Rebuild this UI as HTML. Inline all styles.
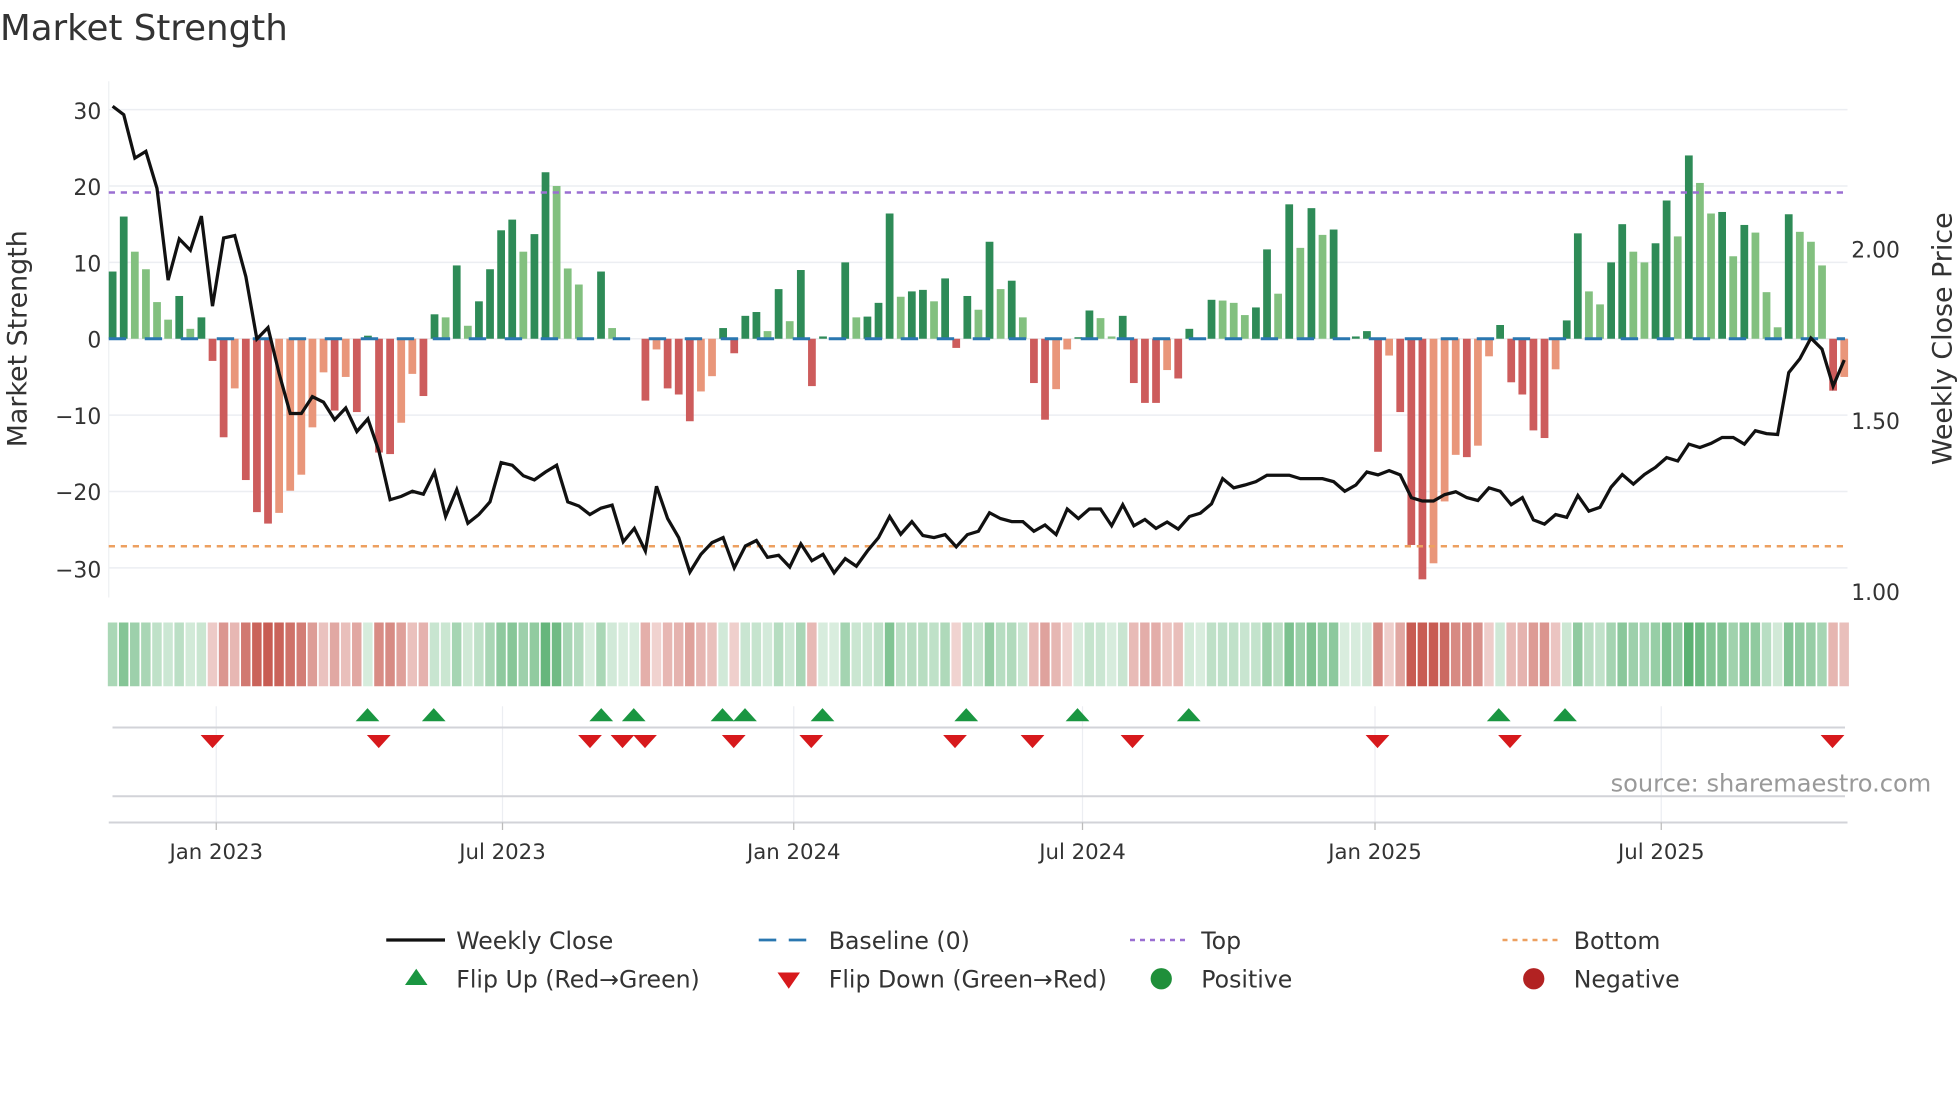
<!DOCTYPE html>
<html><head><meta charset="utf-8">
<style>
html,body{margin:0;padding:0;background:#fff;}
svg{display:block;}
text{font-family:"DejaVu Sans","Liberation Sans",sans-serif;fill:#333;}
</style></head>
<body>
<svg id="s" xmlns="http://www.w3.org/2000/svg" width="1960" height="1102" viewBox="0 0 1568 881.6">
<rect width="1568" height="881.6" fill="#fff"/>
<text x="0" y="32" font-size="28.5" fill="#333">Market Strength</text>
<g id="grid" stroke="#eceef2" stroke-width="1.2"></g>
<line x1="87" y1="65" x2="87" y2="478" stroke="#eef0f3" stroke-width="1"/>
<g id="bars"></g>
<line x1="87" y1="271" x2="1476" y2="271" stroke="#2a77b0" stroke-width="2.4" stroke-dasharray="13.9 14.9"/>
<line x1="87" y1="154" x2="1476" y2="154" stroke="#9a6fd2" stroke-width="2" stroke-dasharray="5 4.6"/>
<line x1="87" y1="437" x2="1476" y2="437" stroke="#eda060" stroke-width="2" stroke-dasharray="5 4.6"/>
<polyline id="close" fill="none" stroke="#111" stroke-width="2.6" stroke-linejoin="miter"/>
<g id="heat"></g>
<g stroke="#eceef2" stroke-width="1">
<line x1="173" y1="565" x2="173" y2="658"/><line x1="402" y1="565" x2="402" y2="658"/>
<line x1="635" y1="565" x2="635" y2="658"/><line x1="866" y1="565" x2="866" y2="658"/>
<line x1="1100" y1="565" x2="1100" y2="658"/><line x1="1329" y1="565" x2="1329" y2="658"/>
</g>
<line x1="90" y1="582" x2="1476" y2="582" stroke="#d2d3d8" stroke-width="1.6"/>
<line x1="90" y1="637" x2="1476" y2="637" stroke="#d2d3d8" stroke-width="1.6"/>
<line x1="87" y1="658" x2="1478" y2="658" stroke="#d2d3d8" stroke-width="1.6"/>
<g stroke="#bbb" stroke-width="1">
<line x1="173" y1="658" x2="173" y2="664"/><line x1="402" y1="658" x2="402" y2="664"/>
<line x1="635" y1="658" x2="635" y2="664"/><line x1="866" y1="658" x2="866" y2="664"/>
<line x1="1100" y1="658" x2="1100" y2="664"/><line x1="1329" y1="658" x2="1329" y2="664"/>
</g>
<g id="marks"></g>
<g font-size="17.5" text-anchor="end">
<text x="81" y="95">30</text><text x="81" y="156">20</text><text x="81" y="217">10</text>
<text x="81" y="278">0</text><text x="81" y="339">−10</text><text x="81" y="400">−20</text><text x="81" y="462">−30</text>
</g>
<g font-size="17.5">
<text x="1481" y="206">2.00</text><text x="1481" y="343">1.50</text><text x="1481" y="480">1.00</text>
</g>
<text transform="translate(21,271) rotate(-90)" text-anchor="middle" font-size="21.5">Market Strength</text>
<text transform="translate(1561,271) rotate(-90)" text-anchor="middle" font-size="21.5">Weekly Close Price</text>
<g font-size="17" text-anchor="middle">
<text x="173" y="687">Jan 2023</text><text x="402" y="687">Jul 2023</text><text x="635" y="687">Jan 2024</text>
<text x="866" y="687">Jul 2024</text><text x="1100" y="687">Jan 2025</text><text x="1329" y="687">Jul 2025</text>
</g>
<text x="1545" y="633" text-anchor="end" font-size="19.3" fill="#999" style="fill:#999">source: sharemaestro.com</text>
<g font-size="18.9">
<line x1="309" y1="752" x2="356" y2="752" stroke="#111" stroke-width="2.6"/>
<text x="365" y="759">Weekly Close</text>
<line x1="607" y1="752" x2="651" y2="752" stroke="#2a77b0" stroke-width="2.2" stroke-dasharray="14 10"/>
<text x="663" y="759">Baseline (0)</text>
<line x1="904" y1="752" x2="948" y2="752" stroke="#9a6fd2" stroke-width="2" stroke-dasharray="4 4"/>
<text x="961" y="759">Top</text>
<line x1="1202" y1="752" x2="1248" y2="752" stroke="#eda060" stroke-width="2" stroke-dasharray="4 4"/>
<text x="1259" y="759">Bottom</text>
<polygon points="324,788 342,788 333,775" fill="#1a9641"/>
<text x="365" y="790">Flip Up (Red→Green)</text>
<polygon points="622,778 640,778 631,791" fill="#d7191c"/>
<text x="663" y="790">Flip Down (Green→Red)</text>
<circle cx="929" cy="783" r="8.5" fill="#1f8f3a"/>
<text x="961" y="790">Positive</text>
<circle cx="1227" cy="783" r="8.5" fill="#b22222"/>
<text x="1259" y="790">Negative</text>
</g>
</svg>
<script>
(function(){
var NS="http://www.w3.org/2000/svg";
function el(t,a,p){var e=document.createElementNS(NS,t);for(var k in a)e.setAttribute(k,a[k]);document.getElementById(p).appendChild(e);return e;}
for(var k=-3;k<=3;k++){var y=271-61.1*k;el("line",{x1:87,x2:1478,y1:y,y2:y},"grid");}
var v=[8.8,16,11.4,9.1,4.8,2.5,5.6,1.3,2.8,-2.9,-12.9,-6.5,-18.5,-22.7,-24.2,-22.8,-19.9,-17.8,-11.6,-4.4,-9.4,-5,-9.6,0.4,-14.9,-15.1,-11,-4.6,-7.5,3.2,2.8,9.6,1.7,4.9,9.1,14.2,15.6,11.4,13.7,21.8,
20,9.2,7.1,0,8.8,1.4,0,0,-8.1,-1.4,-6.5,-7.3,-10.8,-6.9,-4.9,1.4,-1.9,3,3.5,1,6.5,2.3,9,-6.2,0.3,0,10,2.8,2.9,4.7,16.4,5.5,6.2,6.4,4.9,7.9,-1.2,5.6,3.8,12.7,
6.5,7.6,2.8,-5.8,-10.6,-6.6,-1.4,0.2,3.7,2.7,0.3,3,-5.8,-8.4,-8.4,-4.1,-5.2,1.3,0,5.1,5,4.7,3.1,4.1,11.7,5.9,17.6,11.9,17.1,13.6,14.3,0,0.3,1,-14.8,-2.2,-9.6,-27,-31.5,
-29.4,-21.3,-15.2,-15.5,-14,-2.3,1.8,-5.7,-7.3,-12,-13,-4,2.4,13.8,6.2,4.5,10,15,11.4,10,12.5,18.1,13.4,24,20.4,16.4,16.6,10.8,14.9,13.9,6.1,1.5,16.3,14,12.7,9.6,-6.8,-5];
var L=[15,35,138,122,210,428,330,357,276,490,328,322,420,568,541,650,745,745,705,718,760,732,788,758,835,950,942,930,937,884,990,926,1006,985,955,862,868,893,903,884,
868,955,965,985,970,963,1050,1018,1072,918,995,1040,1122,1080,1052,1040,1112,1060,1047,1087,1082,1110,1055,1095,1080,1124,1090,1108,1072,1040,990,1032,1002,1035,1040,1033,1062,1033,1025,981,
995,1002,1002,1025,1010,1033,972,995,972,972,1012,962,1012,997,1018,1003,1020,990,982,960,900,922,915,907,892,892,892,900,900,900,907,930,915,884,891,881,891,945,953,
953,938,931,945,952,922,930,962,945,998,1008,985,992,940,977,968,920,890,913,890,873,850,858,818,826,816,802,802,818,786,793,795,648,615,566,592,680,618];
var x0=90.1,dx=8.88,pts=[];
function mix(c,t){return "rgb("+c.map(function(q){return Math.round(255+(q-255)*t);}).join(",")+")";}
for(var i=0;i<v.length;i++){
 var x=x0+i*dx,val=v[i],pv=i?v[i-1]:0,col;
 if(val>=0)col=(val>=pv)?"#2e8b57":"#82c07f";else col=(val<=pv)?"#cd5c5c":"#e9967a";
 var h=Math.abs(val)*6.11;
 if(h>0.3)el("rect",{x:x-3.1,y:val>=0?271-h:271,width:6.2,height:h,fill:col},"bars");
 var t=0.22+0.72*Math.min(Math.abs(val)/24,1);
 var hc=val>=0?mix([80,172,105],t):mix([196,82,72],t);
 el("rect",{x:x-4.44+0.6,y:498,width:dx-1.3,height:51,fill:hc},"heat");
 pts.push(x.toFixed(1)+","+(L[i]*0.3366+80).toFixed(1));
}
document.getElementById("close").setAttribute("points",pts.join(" "));
[294,347,481,507,578,596,658,773,862,951,1199,1252].forEach(function(x){el("polygon",{points:(x-9.5)+",577 "+(x+9.5)+",577 "+x+",566.5",fill:"#1a9641"},"marks");});
[170,303,472,498,516,587,649,764,826,906,1102,1208,1466].forEach(function(x){el("polygon",{points:(x-9.5)+",588 "+(x+9.5)+",588 "+x+",598.5",fill:"#d7191c"},"marks");});
})();
</script>
</body></html>
